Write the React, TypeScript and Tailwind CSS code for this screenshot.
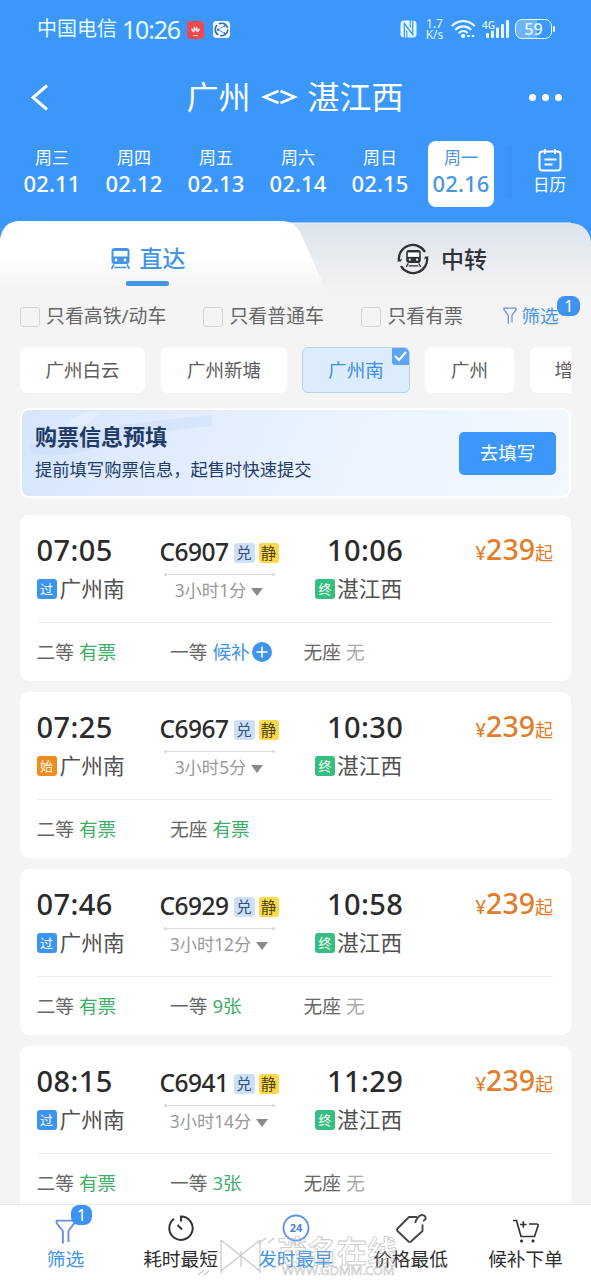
import type { ReactNode } from "react";

const days = [
  { w: "周三", d: "02.11" },
  { w: "周四", d: "02.12" },
  { w: "周五", d: "02.13" },
  { w: "周六", d: "02.14" },
  { w: "周日", d: "02.15" },
  { w: "周一", d: "02.16", on: true },
];

type Seat = { kind: string; value: string; tone: "ok" | "wait" | "none" };
type Train = { dep: string; arr: string; no: string; dur: string; origin: boolean; seats: Seat[] };

const trains: Train[] = [
  {
    dep: "07:05", arr: "10:06", no: "C6907", dur: "3小时1分", origin: false,
    seats: [
      { kind: "二等", value: "有票", tone: "ok" },
      { kind: "一等", value: "候补", tone: "wait" },
      { kind: "无座", value: "无", tone: "none" },
    ],
  },
  {
    dep: "07:25", arr: "10:30", no: "C6967", dur: "3小时5分", origin: true,
    seats: [
      { kind: "二等", value: "有票", tone: "ok" },
      { kind: "无座", value: "有票", tone: "ok" },
    ],
  },
  {
    dep: "07:46", arr: "10:58", no: "C6929", dur: "3小时12分", origin: false,
    seats: [
      { kind: "二等", value: "有票", tone: "ok" },
      { kind: "一等", value: "9张", tone: "ok" },
      { kind: "无座", value: "无", tone: "none" },
    ],
  },
  {
    dep: "08:15", arr: "11:29", no: "C6941", dur: "3小时14分", origin: false,
    seats: [
      { kind: "二等", value: "有票", tone: "ok" },
      { kind: "一等", value: "3张", tone: "ok" },
      { kind: "无座", value: "无", tone: "none" },
    ],
  },
];

const toneClass = { ok: "text-[#3fae68]", wait: "text-[#3f93ea]", none: "text-[#aaaaaa]" };

function StatusBar() {
  return (
    <div className="flex h-[58px] items-center pl-[37px] pr-[36px] text-[#e4fbff]">
      <span className="text-[20px] leading-[24px]">中国电信</span>
      <span className="ml-[5px] text-[25px] leading-[24px] tracking-[-1.2px]">10:26</span>
      <svg className="ml-[7px] mt-px" width="17" height="18" viewBox="0 0 17 18">
        <rect width="17" height="18" rx="3.5" fill="#ee4a50" />
        <path d="M8 11C6 9 6 6.5 7.6 5.2 8.6 7 8.4 9 8 11zM9 11c2-2 2-4.500.4-5.800-1 1.800-.8 3.800-.4 5.800zM7 11.300C5 10.800 4 9 4.500 7.300 6 8 6.800 9.500 7 11.300zM10 11.300c2-.5 3-2.300 2.500-4-1.500.7-2.300 2.200-2.500 4z" fill="#fff" />
        <path d="M6 14.500h5" stroke="#fbb" strokeWidth="1" />
      </svg>
      <svg className="ml-[9px]" width="17" height="17" viewBox="0 0 17 17">
        <rect width="17" height="17" rx="3.500" fill="#f4fbff" />
        <circle cx="8.500" cy="8.500" r="6.300" fill="none" stroke="#2e68c9" strokeWidth="1.600" strokeDasharray="11 2" />
        <path d="M11.500 5L5 8.700l6.500 3.500" fill="none" stroke="#2e68c9" strokeWidth="0.700" />
        <circle cx="11.500" cy="5" r=".9" fill="#2e68c9" />
        <circle cx="5" cy="8.700" r="1.100" fill="#2e68c9" />
        <circle cx="11.500" cy="12.200" r=".9" fill="#2e68c9" />
      </svg>
      <div className="flex-1" />
      <svg width="17" height="18" viewBox="0 0 17 18">
        <path d="M4 .5H13C16 .8 16.500 2 16.500 5v8c0 3-.5 4.200-3.500 4.500H4C1 17.200.5 16 .5 13V5C.5 2 1 .8 4 .5z" fill="#e4fbff" />
        <path d="M4.300 18V3.500l8.400 11V0" fill="none" stroke="#3c97fa" strokeWidth="1.300" />
        <path d="M6.800 18V10.500M10.200 0v7.500" fill="none" stroke="#3c97fa" strokeWidth="1.200" />
      </svg>
      <div className="ml-[8px] w-[19px] text-center text-[12px] leading-[11px]">
        <div>1.7</div>
        <div>K/s</div>
      </div>
      <svg className="ml-[7px]" width="25" height="20" viewBox="0 0 25 20" fill="none" stroke="#e4fbff" strokeWidth="2.200" strokeLinecap="round">
        <path d="M1.500 6.500a15.500 15.500 0 0 1 21.500 0M5 10.300a10.300 10.300 0 0 1 14.500 0M8.500 13.600a5.500 5.500 0 0 1 7.500 0" />
        <circle cx="12.200" cy="17" r="1.500" fill="#e4fbff" strokeWidth="1.300" />
        <path d="M17 17h1M21.500 17h1" strokeWidth="1.800" />
      </svg>
      <svg className="ml-[5px]" width="29" height="20" viewBox="0 0 29 20" fill="#e4fbff">
        <text x="1" y="9.500" fontSize="11.500" fontWeight="500" textLength="13" lengthAdjust="spacingAndGlyphs">4G</text>
        <rect x="5" y="14" width="3" height="5" rx="1" />
        <rect x="10" y="11.500" width="3" height="7.500" rx="1" />
        <rect x="15" y="8.500" width="3" height="10.500" rx="1" />
        <rect x="20" y="5" width="3" height="14" rx="1" />
        <rect x="25" y="1" width="3" height="18" rx="1" />
      </svg>
      <div className="ml-[5px] flex h-[20px] w-[37px] items-center justify-center rounded-[7px] border-[1.500px] border-[#e4fbff] bg-[linear-gradient(90deg,#6fb4fb_59%,transparent_59%)] text-[16px] font-medium leading-[16px]">59</div>
      <div className="ml-px h-[6px] w-[2px] rounded bg-[#e4fbff]" />
    </div>
  );
}

function TitleBar() {
  return (
    <div className="flex h-[78px] items-center justify-between pl-[28px] pr-[29px] text-white">
      <svg width="20" height="27" viewBox="0 0 20 27" fill="none" stroke="#fff" strokeWidth="3">
        <path d="M19 1.500L5 13.500l14 12" />
      </svg>
      <div className="ml-[13px] flex items-center text-[32px] leading-[40px]">
        <span>广州</span>
        <svg className="mx-[10px]" width="37" height="18" viewBox="0 0 37 18" fill="none" stroke="#fff" strokeWidth="2.500">
          <path d="M17.500 3L3 9l14.500 6M19.500 3L34 9l-14.500 6" />
        </svg>
        <span>湛江西</span>
      </div>
      <div className="flex gap-[6px]">
        <i className="size-[7px] rounded-full bg-white" />
        <i className="size-[7px] rounded-full bg-white" />
        <i className="size-[7px] rounded-full bg-white" />
      </div>
    </div>
  );
}

function DateStrip() {
  return (
    <div className="flex h-[85px] pl-[11px] pt-[4px] text-white">
      {days.map((x) => (
        <div
          key={x.d}
          className={
            x.on
              ? "ml-[7px] mr-[7.500px] flex h-[66px] w-[66px] mt-px flex-col items-center rounded-[8px] bg-white text-[#4a95e0]"
              : "mt-px flex h-[66px] w-[82px] flex-col items-center"
          }
        >
          <div className="mt-[6px] text-[17px] leading-[22px]">{x.w}</div>
          <div className="mt-px text-[22px] font-medium leading-[26px] tracking-[0.1px]">{x.d}</div>
        </div>
      ))}
      <div className="mt-[6px] h-[52px] w-[10px] bg-[linear-gradient(90deg,transparent,#3892f5)]" />
      <div className="ml-[9px] flex w-[58px] flex-col items-center pt-[8px]">
        <svg width="24" height="24" viewBox="0 0 24 24" fill="none" stroke="#fff" strokeWidth="2">
          <rect x="1.500" y="3.500" width="21" height="19" rx="3" />
          <path d="M7 1v5M17 1v5M6.500 11.500h12M6.500 16.500h8" />
        </svg>
        <div className="mt-[3px] text-[16.500px] leading-[20px]">日历</div>
      </div>
    </div>
  );
}

function TrainGlyph({ color, size }: { color: string; size: number }) {
  return (
    <svg width={size} height={size} viewBox="0 0 20 21">
      <path d="M4 0h12q3 0 3 3v10q0 3-3 3H4q-3 0-3-3V3q0-3 3-3z" fill={color} />
      <path d="M3 3h14v5.500H3z" fill="#fbfcfd" />
      <circle cx="5.500" cy="12" r="1.400" fill="#fff" />
      <circle cx="14.500" cy="12" r="1.400" fill="#fff" />
      <path d="M3.500 16.500L1 21M16.500 16.500L19 21M4 19.500h12" stroke={color} strokeWidth="1.600" fill="none" />
    </svg>
  );
}

function Tabs() {
  return (
    <div className="relative flex h-[76px] bg-[linear-gradient(180deg,#3c97fa_24px,#f4f4f4_24px)]">
      <svg className="absolute inset-0" width="591" height="76" viewBox="0 0 591 76">
        <defs>
          <linearGradient id="tabOff" x1="0" y1="0" x2="0" y2="1">
            <stop offset="0" stopColor="#dde4ec" />
            <stop offset="1" stopColor="#f4f4f4" />
          </linearGradient>
          <linearGradient id="tabOn" x1="0" y1="0" x2="0" y2="1">
            <stop offset="0" stopColor="#ffffff" />
            <stop offset=".5" stopColor="#ffffff" />
            <stop offset=".9" stopColor="#f4f4f4" />
          </linearGradient>
        </defs>
        <path d="M200 2H571a20 20 0 0 1 20 20v54H200z" fill="url(#tabOff)" />
        <path d="M280 2H571" stroke="#eef4fb" />
        <path d="M0 76V18Q3 0 20 0H282Q294 0 300 11L323 62 329 76z" fill="url(#tabOn)" />
      </svg>
      <div className="relative flex w-[295px] flex-col items-center">
        <div className="flex h-[60px] items-center gap-[9px] pt-[14px] text-[23px] font-medium leading-[28px] text-[#4595e4]">
          <TrainGlyph color="#4595e4" size={21} />
          直达
        </div>
        <div className="h-[5px] w-[43px] rounded-[2px] bg-[#4595e4]" />
      </div>
      <div className="relative flex h-[60px] flex-1 items-center justify-center pt-[15px] pr-[2px] text-[23px] font-medium leading-[28px] text-[#2e3236]">
        <div className="relative mr-[12px] flex size-[32px] items-center justify-center">
          <svg className="absolute inset-0" width="32" height="32" viewBox="0 0 32 32" fill="none" stroke="#2e3236" strokeWidth="2.300">
            <path d="M2 18A14 14 0 0 1 28 9M30 14A14 14 0 0 1 4 23" />
            <path d="M0 18.500h4l1-3zM32 13.500h-4l-1 3z" fill="#2e3236" stroke="none" />
          </svg>
          <TrainGlyph color="#2e3236" size={17} />
        </div>
        中转
      </div>
    </div>
  );
}

function Check({ label, className }: { label: string; className: string }) {
  return (
    <div className={"flex items-center " + className}>
      <i className="mr-[6px] mt-[3px] size-[20px] rounded-[3px] border-[1.500px] border-[#d4d4d4]" />
      {label}
    </div>
  );
}

function Funnel({ width, height }: { width: number; height: number }) {
  return (
    <svg width={width} height={height} viewBox="0 0 20 24" fill="none" stroke="#6b8fe0" strokeWidth="1.800" strokeLinejoin="round">
      <path d="M7.500 23.500V11.500L1.500 4V1.500h17V4L12.800 11.500V22" />
    </svg>
  );
}

function Chip({ label, className }: { label: string; className: string }) {
  return <div className={"flex h-[46px] shrink-0 items-center justify-center rounded-[7px] bg-white " + className}>{label}</div>;
}

function Filters() {
  return (
    <>
      <div className="flex h-[37px] items-center pl-[20px] text-[18.900px] leading-[24px] text-[#666]">
        <Check label="只看高铁/动车" className="w-[183.400px]" />
        <Check label="只看普通车" className="w-[158px]" />
        <Check label="只看有票" className="w-[141px]" />
        <div className="relative flex items-center text-[18.500px] text-[#4a95e6]">
          <Funnel width={16} height={17} />
          <span className="ml-[3px]">筛选</span>
          <span className="absolute left-[55px] top-[-8px] flex h-[20px] w-[23px] items-center justify-center rounded-[8px] bg-[#3f93f0] text-[16px] leading-[18px] text-white">1</span>
        </div>
      </div>
      <div className="mx-[20px] mt-[13px] flex overflow-hidden text-[18.500px] text-[#5c5c5c]">
        <Chip label="广州白云" className="w-[125px]" />
        <Chip label="广州新塘" className="ml-[16px] w-[126px]" />
        <div className="relative ml-[15px] flex h-[46px] w-[108px] shrink-0 items-center justify-center overflow-hidden rounded-[6px] border-[1.500px] border-[#b4d3f3] bg-[#dcecfd] text-[#3c8fe0]">
          广州南
          <span className="absolute right-0 top-0 flex size-[17px] items-center justify-center rounded-bl-[3px] bg-[#5ea6f3]">
            <svg width="13" height="11" viewBox="0 0 13 11" fill="none" stroke="#fff" strokeWidth="2">
              <path d="M1 5l4 4 7-8" />
            </svg>
          </span>
        </div>
        <Chip label="广州" className="ml-[15px] w-[89px]" />
        <Chip label="增城" className="ml-[16px] w-[86px]" />
      </div>
    </>
  );
}

function Banner() {
  return (
    <div className="relative mx-[20px] mt-[15px] flex h-[90px] items-center overflow-hidden rounded-[9px] border-2 border-white bg-[linear-gradient(110deg,#d7e6fd_0%,#e8f2ff_50%,#f3f8ff_100%)] pl-[13px] pr-[13px] text-[#223a66]">
      <svg className="absolute left-0 top-0" width="200" height="50" viewBox="0 0 200 50">
        <path d="M8 36Q50 18 190 5V16Q120 22 90 34 40 50 10 43z" fill="#c5d9f8" opacity=".4" />
        <path d="M44 16Q55 0 80 2L66 14z" fill="#e8f3ff" opacity=".6" />
      </svg>
      <div className="relative flex-1">
        <div className="text-[22px] font-bold leading-[28px]">购票信息预填</div>
        <div className="mt-[8px] pb-[2px] text-[17.300px] leading-[24px]">提前填写购票信息，起售时快速提交</div>
      </div>
      <div className="flex h-[43px] w-[97px] items-center justify-center rounded-[5px] bg-[#3c97fa] text-[18.500px] text-white">去填写</div>
    </div>
  );
}

function Tag({ children, className }: { children: ReactNode; className: string }) {
  return <span className={"flex h-[20px] shrink-0 items-center justify-center rounded-[3px] leading-[18px] " + className}>{children}</span>;
}

function TrainCard({ t }: { t: Train }) {
  return (
    <div className="mx-[20px] h-[166px] shrink-0 rounded-[9px] bg-white pl-[16.500px] pr-[18px]">
      <div className="flex h-[108px] border-b border-[#ececec] pt-[19px]">
        <div className="w-[117px]">
          <div className="text-[29px] font-medium leading-[32px] tracking-[0.4px] text-[#2b2b2b]">{t.dep}</div>
          <div className="mt-[8.500px] flex items-center gap-[3px] text-[21.700px] leading-[28px] text-[#505050]">
            {t.origin ? (
              <Tag className="w-[20px] bg-[#f08c1e] text-[13px] text-white">始</Tag>
            ) : (
              <Tag className="w-[20px] bg-[#3b94ee] text-[13px] text-white">过</Tag>
            )}
            广州南
          </div>
        </div>
        <div className="flex w-[131px] flex-col items-center pt-[2.500px]">
          <div className="flex items-center text-[#2b2b2b]">
            <span className="w-[74px] text-[24.500px] font-medium leading-[30px] tracking-[-0.500px]">{t.no}</span>
            <Tag className="mt-[3px] w-[21px] bg-[#cde0fa] text-[15.500px] text-[#3b4f74]">兑</Tag>
            <Tag className="ml-[4px] mt-[3px] w-[20px] bg-[#fbd84c] text-[15.500px] text-[#4d4420]">静</Tag>
          </div>
          <div className="mt-[6px] flex w-[111px] items-center">
            <i className="size-[3px] rounded-full bg-[#d6d6d6]" />
            <i className="h-px flex-1 bg-[#dedede]" />
            <i className="size-[3px] rounded-full bg-[#d6d6d6]" />
          </div>
          <div className="mt-[3px] flex items-center gap-[5px] text-[17.300px] leading-[24px] text-[#999]">
            {t.dur}
            <svg className="mt-[2px]" width="12" height="8" viewBox="0 0 12 8" fill="#8a8a8a">
              <path d="M0 0h12L6 8z" />
            </svg>
          </div>
        </div>
        <div className="w-[140px] pl-[30.500px]">
          <div className="pl-[12px] text-[29px] font-medium leading-[32px] tracking-[0.4px] text-[#2b2b2b]">{t.arr}</div>
          <div className="mt-[8.500px] flex items-center gap-[2px] text-[21.700px] leading-[28px] text-[#505050]">
            <Tag className="w-[20px] bg-[#36bd80] text-[13px] text-white">终</Tag>
            湛江西
          </div>
        </div>
        <div className="-mt-px flex h-[32px] flex-1 items-baseline justify-end text-[#e07e2b]">
          <span className="text-[19px] font-medium leading-[32px]">¥</span>
          <span className="text-[28.500px] font-medium leading-[32px]">239</span>
          <span className="text-[18px] leading-[32px]">起</span>
        </div>
      </div>
      <div className="flex h-[58px] items-center text-[18.700px] leading-[26px] text-[#666]">
        {t.seats.map((s) => (
          <div key={s.kind} className="flex w-[133.500px] items-center">
            {s.kind}
            <span className={"ml-[5px] " + toneClass[s.tone]}>{s.value}</span>
            {s.tone === "wait" && (
              <svg className="ml-[2px]" width="20" height="20" viewBox="0 0 20 20">
                <circle cx="10" cy="10" r="10" fill="#3f93ea" />
                <path d="M4.500 10h11M10 4.500v11" stroke="#fff" strokeWidth="1.600" />
              </svg>
            )}
          </div>
        ))}
      </div>
    </div>
  );
}

function NavItem({ label, active, icon }: { label: string; active?: boolean; icon: ReactNode }) {
  return (
    <div className={"flex w-[115px] flex-col items-center text-[18.700px] leading-[24px] " + (active ? "text-[#3f93ea]" : "text-[#2e2e2e]")}>
      <div className="relative flex h-[30px] items-center">{icon}</div>
      <div className="mt-[4px] whitespace-nowrap">{label}</div>
    </div>
  );
}

function BottomNav() {
  return (
    <div className="relative flex h-[76px] shrink-0 border-t border-[#e9e9e9] bg-white pl-[8px] pt-[8px]">
      <NavItem
        label="筛选"
        active
        icon={
          <>
            <span className="pt-[6px]"><Funnel width={21} height={25} /></span>
            <span className="absolute left-[16px] top-[-8px] flex h-[20px] w-[21px] items-center justify-center rounded-[8px] bg-[#3f93f0] text-[16px] leading-[18px] text-white">1</span>
          </>
        }
      />
      <NavItem
        label="耗时最短"
        icon={
          <svg width="28" height="28" viewBox="0 0 28 28" fill="none" stroke="#333" strokeWidth="2">
            <path d="M14 7.500V2.500A11.700 11.700 0 1 1 7 4.800M10.500 11l4.500 4.500" />
          </svg>
        }
      />
      <NavItem
        label="发时最早"
        active
        icon={
          <svg width="28" height="28" viewBox="0 0 28 28">
            <circle cx="14" cy="14" r="12.500" fill="none" stroke="#5a94e8" strokeWidth="1.800" />
            <text x="14" y="18" textAnchor="middle" fontSize="11" fontWeight="700" fill="#4c84d8">24</text>
          </svg>
        }
      />
      <NavItem
        label="价格最低"
        icon={
          <svg width="32" height="31" viewBox="0 0 32 31" fill="none" stroke="#444" strokeWidth="1.900" strokeLinejoin="round">
            <path d="M22 4H14L2.500 15.500Q1.500 17 2.500 18L13.500 28.500Q14.500 29.500 16 28.500L27.500 18V11.500M20.500 10c-.5-3 1.500-3.500 2.500-5.500 1.500-3 6-3.500 7.500-.5.500 2-.5 3.500-2.500 3.800" />
          </svg>
        }
      />
      <NavItem
        label="候补下单"
        icon={
          <svg className="mt-[6px]" width="28" height="24" viewBox="0 0 28 24" fill="none" stroke="#333" strokeWidth="1.700">
            <path d="M1 1.500h3.500L9 17.500h13.500L26 7Q26.500 5 24.500 5H17M8 5.500h6.500M11.300 2.200v6.600" />
            <circle cx="9.500" cy="22" r="1.200" fill="#333" strokeWidth=".8" />
            <circle cx="21" cy="22" r="1.200" fill="#333" strokeWidth=".8" />
          </svg>
        }
      />
      <div className="absolute left-[196px] top-[30px] flex opacity-60">
        <svg width="82" height="44" viewBox="0 0 82 44" fill="none" stroke="#a5a5a5" strokeWidth="1.200">
          <path d="M25 5V38M64 5V38M45 16V32M25 5L64 36M64 5L25 36M2 40l6-5M8 40l5-4M62 9l8-6M72 8l6-5" />
        </svg>
        <div className="-ml-px pt-[3px]">
          <div className="whitespace-nowrap text-[30px] font-bold leading-[26px] text-white/20 [-webkit-text-stroke:0.800px_#a5a5a5]">茂名在线</div>
          <div className="ml-[5px] text-[13px] leading-[13px] tracking-[-0.1px] text-white [-webkit-text-stroke:0.600px_#9a9a9a]">WWW.GDMM.COM</div>
        </div>
      </div>
    </div>
  );
}

export default function App() {
  return (
    <div className="flex h-[1280px] w-[591px] flex-col overflow-hidden bg-[#f4f4f4] font-['Noto_Sans','Noto_Sans_CJK_SC',sans-serif]">
      <div className="shrink-0 bg-[#3c97fa]">
        <StatusBar />
        <TitleBar />
        <DateStrip />
      </div>
      <div className="flex min-h-0 flex-1 flex-col">
        <Tabs />
        <Filters />
        <Banner />
        <div className="mt-[17px] flex min-h-0 flex-1 flex-col gap-[11px] overflow-hidden">
          {trains.map((t) => (
            <TrainCard key={t.no} t={t} />
          ))}
        </div>
      </div>
      <BottomNav />
    </div>
  );
}
